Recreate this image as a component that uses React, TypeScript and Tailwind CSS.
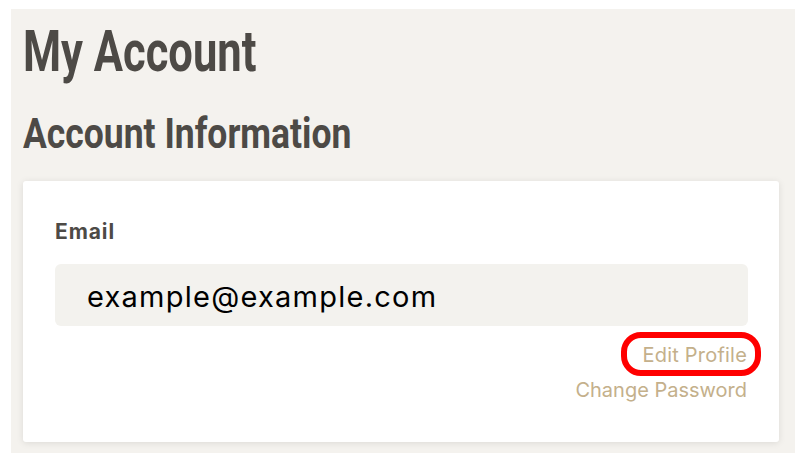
export default function App() {
  return (
    <div className="w-[801px] h-[457px] bg-white pl-[11px] pt-[9px] overflow-hidden">
      <div className="w-[784px] h-[444px] bg-[#f4f2ee] pl-[12px] pt-[13px]">
        <h1
          className="text-[58px] leading-[58px] font-bold text-[#4d4a46] origin-left scale-x-[0.75] whitespace-nowrap"
          style={{ fontFamily: "Roboto, sans-serif" }}
        >
          My Account
        </h1>
        <h2
          className="mt-[32px] text-[43px] leading-[43px] font-bold text-[#4d4a46] origin-left scale-x-[0.825] whitespace-nowrap"
          style={{ fontFamily: "Roboto, sans-serif" }}
        >
          Account Information
        </h2>
        <div className="mt-[26px] w-[756px] h-[261px] bg-white rounded-[3px] shadow-[0_1px_7px_rgba(0,0,0,0.1)] pl-[32px] pr-[31px] pt-[39px]">
          <div
            className="text-[21px] leading-[24px] font-bold tracking-[0.9px] text-[#4d4a46]"
            style={{ fontFamily: "Inter, sans-serif" }}
          >
            Email
          </div>
          <div
            className="mt-[20px] h-[62px] rounded-[6px] bg-[#f3f2ee] flex items-center pl-[32px] pt-[3px] text-[29px] tracking-[1.25px] text-black"
            style={{ fontFamily: "Inter, sans-serif" }}
          >
            example@example.com
          </div>
          <div
            className="flex flex-col items-end pr-[1px] text-[20px] leading-[24px] text-[#c4b08b]"
            style={{ fontFamily: "Inter, sans-serif" }}
          >
            <a className="relative mt-[17px] tracking-[0.2px]">
              Edit Profile
              <span className="absolute left-[-22px] right-[-14px] top-[-11px] bottom-[-9px] border-[6px] border-[#ff0000] rounded-[20px]" />
            </a>
            <a className="mt-[11px]">Change Password</a>
          </div>
        </div>
      </div>
    </div>
  );
}
